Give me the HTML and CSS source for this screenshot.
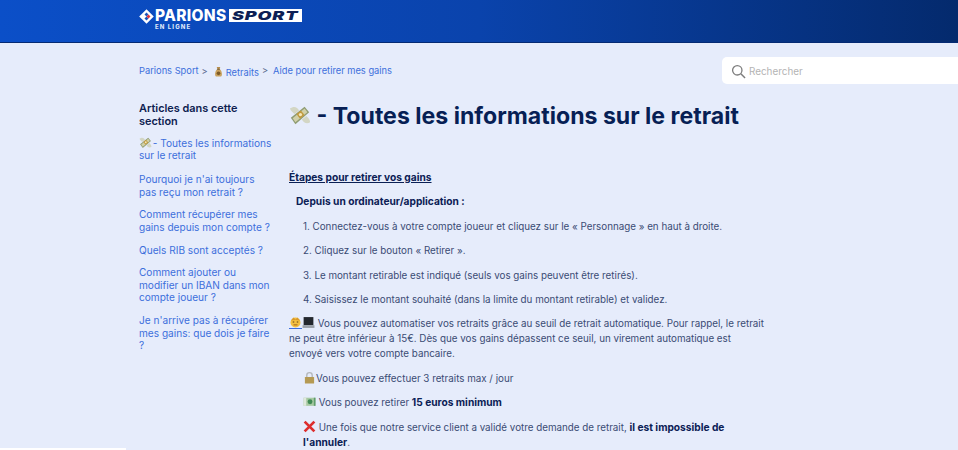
FILE: index.html
```html
<!DOCTYPE html>
<html lang="fr">
	<head>
		<meta charset="utf-8">
		<title>Toutes les informations sur le retrait</title>
		<link rel="stylesheet" href="styles.css">
	</head>
	<body>

		<svg class="defs" width="0" height="0" aria-hidden="true">
			<defs>
				<symbol id="moneyWings" viewBox="0 0 24 24">
					<path d="M1 5 C5 2 9 3 11 7 L6 11 C4 9 2 8 1 5 Z" fill="#d3d6c4"/>
					<path d="M14 17 L19 13 C21 15 23 17 23 20 C20 22 16 21 14 17 Z" fill="#d3d6c4"/>
					<path d="M2 15 L17 3 L22 9 L7 22 Z" fill="#8f9c72"/>
					<path d="M4 15.500 L17 5 L20 9 L7 20 Z" fill="#d1d0a8"/>
					<path d="M8 11 L13 7 L17 12 L12 16 Z" fill="#c09a3e"/>
					<circle cx="12.500" cy="11.500" r="1.800" fill="#f3e6b8"/>
				</symbol>
				<symbol id="moneyBag" viewBox="0 0 24 24">
					<path d="M8 2 H16 L14 7 H10 Z" fill="#b98f4e"/>
					<path d="M9 7 H15 C20 11 21 22 17 23 H7 C3 22 4 11 9 7 Z" fill="#c9a25f"/>
					<rect x="9" y="6" width="6" height="2" fill="#6b4d22"/>
					<circle cx="12" cy="16" r="4" fill="#7d5a26"/>
				</symbol>
				<symbol id="face" viewBox="0 0 24 24">
					<circle cx="12" cy="13" r="10" fill="#f4c040"/>
					<path d="M3 9 L8 3 L12 7 L16 3 L21 9 L12 8 Z" fill="#d99a2b"/>
					<rect x="6.500" y="11" width="3" height="2" fill="#5b3a10"/>
					<rect x="14.500" y="11" width="3" height="2" fill="#5b3a10"/>
					<rect x="8" y="17" width="8" height="1.600" fill="#8a4b12"/>
				</symbol>
				<symbol id="laptop" viewBox="0 0 24 24">
					<rect x="3" y="2" width="18" height="15" fill="#24282e"/>
					<rect x="1" y="17" width="22" height="5" fill="#9aa0a8"/>
				</symbol>
				<symbol id="lock" viewBox="0 0 24 24">
					<path d="M7 11 V8 C7 1.500 17 1.500 17 8 V11" fill="none" stroke="#b3b7bb" stroke-width="2.500"/>
					<rect x="3.500" y="11" width="17" height="12" rx="1" fill="#b59a54"/>
				</symbol>
				<symbol id="bill" viewBox="0 0 24 24">
					<rect x="1" y="5" width="22" height="15" fill="#a7c9a2"/>
					<rect x="1" y="5" width="5" height="15" fill="#dfe8dc"/>
					<circle cx="13" cy="12.500" r="4.500" fill="#3f8a54"/>
					<rect x="20" y="5" width="3" height="15" fill="#5e9c6c"/>
				</symbol>
				<symbol id="cross" viewBox="0 0 24 24">
					<path d="M3 3 L21 21 M21 3 L3 21" fill="none" stroke="#dd2e2e" stroke-width="5"/>
				</symbol>
			</defs>
		</svg>

		<header class="top">
			<a class="logo" href="#">
				<svg class="logoMark" viewBox="0 0 16 16" width="15" height="15">
					<rect x="2.500" y="2.500" width="11" height="11" transform="rotate(45 8 8)" fill="#fff"/>
					<rect x="5" y="5" width="3" height="3" transform="rotate(45 8 8)" fill="#1c54b8"/>
					<rect x="8" y="8" width="3" height="3" transform="rotate(45 8 8)" fill="#1c54b8"/>
					<rect x="8" y="5" width="3" height="3" transform="rotate(45 8 8)" fill="#e3353c"/>
				</svg>
				<span class="logoText">
					<span class="logoRow"><span class="logoParions">PARIONS</span><span class="logoSport"><span>SPORT</span></span></span>
					<span class="logoLigne">EN LIGNE</span>
				</span>
			</a>
		</header>

		<div class="wrapper">

			<div class="subNav">
				<ol class="crumbs">
					<li><a href="#">Parions Sport</a><span class="sep">&gt;</span></li>
					<li><svg class="emoji"><use href="#moneyBag"/></svg><a class="low" href="#">Retraits</a><span class="sep up">&gt;</span></li>
					<li><a href="#">Aide pour retirer mes gains</a></li>
				</ol>
				<div class="search">
					<svg viewBox="0 0 16 16" width="15" height="15">
						<circle cx="6.700" cy="6.700" r="5" fill="none" stroke="#7d7d7d" stroke-width="1.400"/>
						<path d="M10.500 10.500 L15 15" stroke="#7d7d7d" stroke-width="1.600"/>
					</svg>
					<span>Rechercher</span>
				</div>
			</div>

			<div class="columns">

				<aside class="side">
					<h3>Articles dans cette section</h3>
					<ul>
						<li><a href="#"><svg class="emoji"><use href="#moneyWings"/></svg> - Toutes les informations sur le retrait</a></li>
						<li><a href="#">Pourquoi je n'ai toujours pas reçu mon retrait ?</a></li>
						<li><a href="#">Comment récupérer mes gains depuis mon compte ?</a></li>
						<li><a href="#">Quels RIB sont acceptés ?</a></li>
						<li><a href="#">Comment ajouter ou modifier un IBAN dans mon compte joueur ?</a></li>
						<li><a href="#">Je n'arrive pas à récupérer mes gains: que dois je faire ?</a></li>
					</ul>
				</aside>

				<main class="article">
					<h1><svg class="emojiBig"><use href="#moneyWings"/></svg> - Toutes les informations sur le retrait</h1>

					<p class="stepsTitle"><u><strong>Étapes pour retirer vos gains</strong></u></p>
					<p class="in1"><strong>Depuis un ordinateur/application :</strong></p>
					<p class="in2">1. Connectez-vous à votre compte joueur et cliquez sur le « Personnage » en haut à droite.</p>
					<p class="in2">2. Cliquez sur le bouton « Retirer ».</p>
					<p class="in2">3. Le montant retirable est indiqué (seuls vos gains peuvent être retirés).</p>
					<p class="in2">4. Saisissez le montant souhaité (dans la limite du montant retirable) et validez.</p>
					<p><svg class="emoji lined"><use href="#face"/></svg><svg class="emoji"><use href="#laptop"/></svg> Vous pouvez automatiser vos retraits grâce au seuil de retrait automatique. Pour rappel, le retrait ne peut être inférieur à 15€. Dès que vos gains dépassent ce seuil, un virement automatique est envoyé vers votre compte bancaire.</p>
					<p class="in2"><svg class="emoji"><use href="#lock"/></svg>Vous pouvez effectuer 3 retraits max / jour</p>
					<p class="in2"><svg class="emoji"><use href="#bill"/></svg> Vous pouvez retirer <strong>15 euros minimum</strong></p>
					<p class="in2"><svg class="emoji"><use href="#cross"/></svg> Une fois que notre service client a validé votre demande de retrait, <strong>il est impossible de l'annuler</strong>.</p>
				</main>

			</div>
		</div>

		<div class="cornerStrip"></div>

	</body>
</html>
```

FILE: styles.css
```css
html, body{
	height: 100%;
}

body{
	margin: 0;
	padding: 0;
	overflow: hidden;
	background-color: #e6ecfb;
	font-family: "Inter", "Noto Sans", sans-serif;
	font-size: 9.800px;
	line-height: 15px;
	color: #3a4b74;
}

a{
	color: #3d6fdc;
	text-decoration: none;
}

.defs{
	display: block;
	height: 0;
}

.top{
	height: 43px;
	padding-left: 139px;
	box-sizing: border-box;
	border-bottom: 1px solid #052a73;
	background: linear-gradient(90deg, #0b4fc8 0%, #0a43ac 50%, #042a6d 100%);
}

.logo{
	display: flex;
	align-items: flex-start;
	gap: 1px;
	padding-top: 9px;
}

.logoText{
	display: flex;
	flex-direction: column;
}

.logoRow{
	display: flex;
	align-items: center;
}

.logoParions{
	width: 73px;
	font-weight: 800;
	font-size: 15.500px;
	line-height: 13px;
	color: #fff;
	letter-spacing: 0.300px;
	white-space: nowrap;
}

.logoSport{
	display: flex;
	justify-content: center;
	width: 73px;
	margin-left: 1px;
	background-color: #fff;
	color: #0d1f55;
	font-weight: 900;
	font-style: italic;
	font-size: 12px;
	line-height: 13px;
}

.logoSport span{
	transform: scaleX(1.500);
	letter-spacing: 0.600px;
}

.logoLigne{
	margin-top: 1px;
	font-size: 6px;
	line-height: 7px;
	font-weight: 800;
	letter-spacing: 1.100px;
	color: #d9e3f8;
}

.wrapper{
	padding-left: 139px;
}

.subNav{
	display: flex;
	justify-content: space-between;
	align-items: center;
	padding-top: 14px;
	height: 27px;
}

.crumbs{
	display: flex;
	list-style: none;
	margin: 0;
	padding: 0;
	font-size: 9.300px;
}

.crumbs li{
	display: flex;
	align-items: center;
}

.sep{
	margin: 2px 5px 0 3px;
	color: #5a6b8f;
}

.sep.up{
	margin: -1px 5px 0 3px;
}

.low{
	margin-top: 3px;
}

.crumbs .emoji{
	width: 11px;
	margin: 2px 2px 0 0;
}

.search{
	display: flex;
	align-items: center;
	gap: 3px;
	width: 236px;
	height: 27px;
	box-sizing: border-box;
	padding: 1px 0 0 9px;
	background-color: #fff;
	border-radius: 5px 0 0 5px;
	color: #b4b4b4;
	font-size: 9.900px;
}

.columns{
	display: flex;
	gap: 16px;
	padding-top: 18px;
}

.side{
	width: 134px;
	flex-shrink: 0;
}

.side h3{
	margin: 0 0 7.500px;
	font-size: 10.900px;
	line-height: 13px;
	font-weight: 600;
	color: #0d2150;
}

.side ul{
	list-style: none;
	margin: 0;
	padding: 0;
}

.side li{
	margin-bottom: 10.300px;
	font-size: 10.100px;
	line-height: 12.500px;
}

.side li:first-child{
	margin-bottom: 11.500px;
}

.side .emoji{
	margin-right: -2px;
}

.article{
	width: 478px;
}

.article h1{
	width: 485px;
	margin: 0 0 40px;
	font-size: 23.100px;
	line-height: 28px;
	font-weight: 700;
	color: #071f55;
}

.article p{
	margin: 0 0 9.400px;
}

.article strong{
	font-size: 10.200px;
	font-weight: 700;
	color: #0b2055;
}

.stepsTitle u{
	color: #0b2055;
}

.in1{
	padding-left: 7px;
}

.in2{
	padding-left: 14px;
}

.emoji{
	width: 13px;
	height: 13px;
	vertical-align: -2px;
}

.lined{
	height: 12px;
	border-bottom: 1px solid #3d6fdc;
}

.emojiBig{
	width: 22px;
	height: 22px;
	vertical-align: -2px;
}

.cornerStrip{
	position: fixed;
	left: 0;
	bottom: 0;
	width: 126px;
	height: 2px;
	background-color: #fff;
}
```
